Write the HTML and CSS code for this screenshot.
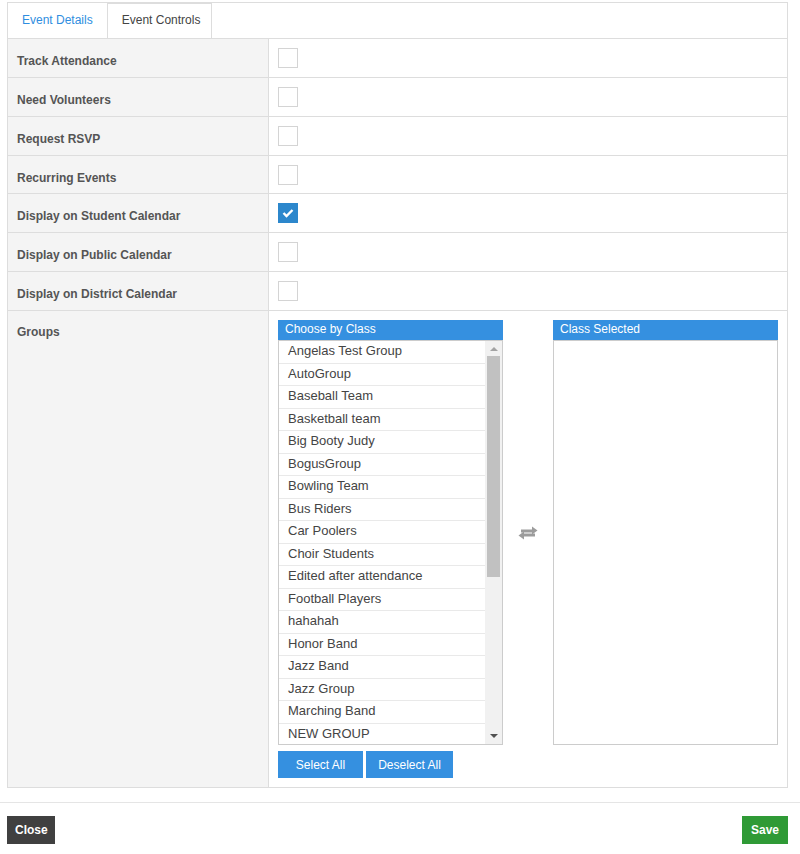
FILE: index.html
```html
<!DOCTYPE html>
<html lang="en">
<head>
  <meta charset="UTF-8" />
  <title>Event Controls</title>
  <link rel="stylesheet" href="styles.css">
</head>
<body>
  <div class="panel">
    <div class="tabs">
      <a class="tab">Event Details</a>
      <a class="tab active">Event Controls</a>
    </div>

    <div class="controls">
      <div class="label">Track Attendance</div>
      <div class="value"><span class="check"></span></div>

      <div class="label">Need Volunteers</div>
      <div class="value"><span class="check"></span></div>

      <div class="label">Request RSVP</div>
      <div class="value"><span class="check"></span></div>

      <div class="label">Recurring Events</div>
      <div class="value"><span class="check"></span></div>

      <div class="label">Display on Student Calendar</div>
      <div class="value">
        <span class="check checked">
          <svg width="12" height="10" viewBox="0 0 12 10"><path d="M1.5 5 L4.5 8 L10.5 2" fill="none" stroke="#fff" stroke-width="2.4"/></svg>
        </span>
      </div>

      <div class="label">Display on Public Calendar</div>
      <div class="value"><span class="check"></span></div>

      <div class="label">Display on District Calendar</div>
      <div class="value"><span class="check"></span></div>

      <div class="label last">Groups</div>
      <div class="value last">
        <div class="picker">
          <div class="box">
            <div class="box-head">Choose by Class</div>
            <div class="box-body">
              <ul class="items">
                <li>Angelas Test Group</li>
                <li>AutoGroup</li>
                <li>Baseball Team</li>
                <li>Basketball team</li>
                <li>Big Booty Judy</li>
                <li>BogusGroup</li>
                <li>Bowling Team</li>
                <li>Bus Riders</li>
                <li>Car Poolers</li>
                <li>Choir Students</li>
                <li>Edited after attendance</li>
                <li>Football Players</li>
                <li>hahahah</li>
                <li>Honor Band</li>
                <li>Jazz Band</li>
                <li>Jazz Group</li>
                <li>Marching Band</li>
                <li>NEW GROUP</li>
              </ul>
              <div class="scrollbar">
                <span class="arrow up"></span>
                <span class="thumb"></span>
                <span class="arrow down"></span>
              </div>
            </div>
          </div>

          <div class="swap">
            <svg width="20" height="14" viewBox="0 0 20 14">
              <path d="M3 3.5 H14 V0.5 L19.5 4.5 L14 8.5 V6.5 H3 Z" fill="#9c9c9c"/>
              <path d="M17 7.5 H6 V5.5 L0.5 9.5 L6 13.5 V10.5 H17 Z" fill="#9c9c9c"/>
            </svg>
          </div>

          <div class="box">
            <div class="box-head">Class Selected</div>
            <div class="box-body"></div>
          </div>
        </div>
        <div class="picker-actions">
          <button class="btn-blue">Select All</button>
          <button class="btn-blue">Deselect All</button>
        </div>
      </div>
    </div>
  </div>

  <div class="footer">
    <button class="btn-close">Close</button>
    <button class="btn-save">Save</button>
  </div>
</body>
</html>
```

FILE: styles.css
```css
body {
  margin: 0;
  padding: 2px 12px 0 7px;
  font-family: "Liberation Sans", Arial, sans-serif;
  color: #555;
  background: #fff;
}

.panel {
  border: 1px solid #ddd;
}

.tabs {
  display: flex;
  height: 35px;
  border-bottom: 1px solid #ddd;
}

.tab {
  display: block;
  padding: 0 14px;
  line-height: 35px;
  font-size: 12px;
  color: #2f8ee0;
  white-space: nowrap;
  cursor: pointer;
}

.tab.active {
  color: #444;
  background: #fff;
  border-left: 1px solid #ddd;
  border-right: 1px solid #ddd;
  border-top: 1px solid #ddd;
  line-height: 33px;
  padding: 0 11px 0 14px;
}

.controls {
  display: grid;
  grid-template-columns: 261px 1fr;
}

.label {
  background: #f4f4f4;
  border-right: 1px solid #ddd;
  border-bottom: 1px solid #ddd;
  padding: 15px 9px 0;
  font-size: 12px;
  font-weight: bold;
  color: #555;
}

.value {
  border-bottom: 1px solid #ddd;
  padding: 9px;
  height: 19.86px;
}

.label.last,
.value.last {
  border-bottom: none;
  height: auto;
}

.label.last {
  padding-top: 14px;
}

.check {
  display: flex;
  align-items: center;
  justify-content: center;
  width: 18px;
  height: 18px;
  border: 1px solid #d4d4d4;
  background: #fff;
}

.check.checked {
  background: #2c87cc;
  border-color: #2c87cc;
}

.picker {
  display: flex;
}

.box {
  width: 225px;
}

.box-head {
  height: 20px;
  line-height: 19px;
  padding-left: 7px;
  background: #3590e0;
  color: #fff;
  font-size: 12px;
}

.box-body {
  display: flex;
  height: 403px;
  border: 1px solid #ccc;
  overflow: hidden;
}

.items {
  flex: 1;
  list-style: none;
  margin: 0;
  padding: 0;
}

.items li {
  height: 21.5px;
  line-height: 19px;
  padding-left: 9px;
  border-bottom: 1px solid #e9e9e9;
  font-size: 13px;
  color: #444;
}

.scrollbar {
  display: flex;
  flex-direction: column;
  align-items: center;
  width: 17px;
  background: #f1f1f1;
}

.arrow {
  width: 0;
  height: 0;
  border-left: 4px solid transparent;
  border-right: 4px solid transparent;
}

.arrow.up {
  margin-top: 6px;
  border-bottom: 4px solid #a3a3a3;
}

.arrow.down {
  margin-top: auto;
  margin-bottom: 6px;
  border-top: 4px solid #505050;
}

.thumb {
  width: 13px;
  height: 221px;
  margin-top: 5px;
  background: #c1c1c1;
}

.swap {
  display: flex;
  align-items: center;
  justify-content: center;
  width: 50px;
}

.picker-actions {
  display: flex;
  gap: 3px;
  margin-top: 6px;
}

.btn-blue {
  height: 27px;
  width: 85px;
  padding: 0;
  border: none;
  background: #3590e0;
  color: #fff;
  font-family: "Liberation Sans", Arial, sans-serif;
  font-size: 12px;
  cursor: pointer;
}

.btn-blue + .btn-blue {
  width: 87px;
}

.footer {
  display: flex;
  justify-content: space-between;
  margin: 14px -12px 0 -7px;
  padding: 13px 12px 10px 7px;
  border-top: 1px solid #e5e5e5;
}

.btn-close,
.btn-save {
  height: 28px;
  padding: 0 8px;
  border: none;
  color: #fff;
  font-family: "Liberation Sans", Arial, sans-serif;
  font-size: 12px;
  font-weight: bold;
  cursor: pointer;
}

.btn-close {
  width: 48px;
  background: #404040;
}

.btn-save {
  width: 46px;
  background: #2f9a36;
}
```
